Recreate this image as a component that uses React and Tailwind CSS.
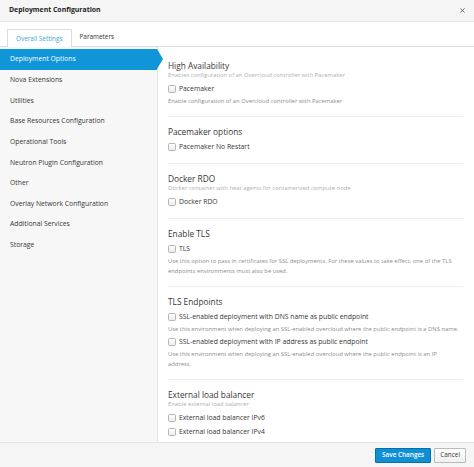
import { X } from "lucide-react";

const navItems = [
  "Deployment Options",
  "Nova Extensions",
  "Utilities",
  "Base Resources Configuration",
  "Operational Tools",
  "Neutron Plugin Configuration",
  "Other",
  "Overlay Network Configuration",
  "Additional Services",
  "Storage",
];

const sections = [
  {
    title: "High Availability",
    description: "Enables configuration of an Overcloud controller with Pacemaker",
    options: [
      { label: "Pacemaker", help: ["Enable configuration of an Overcloud controller with Pacemaker"] },
    ],
  },
  {
    title: "Pacemaker options",
    options: [{ label: "Pacemaker No Restart" }],
  },
  {
    title: "Docker RDO",
    description: "Docker container with heat agents for containerized compute node",
    options: [{ label: "Docker RDO" }],
  },
  {
    title: "Enable TLS",
    options: [
      {
        label: "TLS",
        help: [
          "Use this option to pass in certificates for SSL deployments. For these values to take effect, one of the TLS endpoints environments must also be used.",
        ],
      },
    ],
  },
  {
    title: "TLS Endpoints",
    options: [
      {
        label: "SSL-enabled deployment with DNS name as public endpoint",
        help: ["Use this environment when deploying an SSL-enabled overcloud where the public endpoint is a DNS name."],
      },
      {
        label: "SSL-enabled deployment with IP address as public endpoint",
        help: ["Use this environment when deploying an SSL-enabled overcloud where the public endpoint is an IP", "address."],
      },
    ],
  },
  {
    title: "External load balancer",
    description: "Enable external load balancer",
    options: [{ label: "External load balancer IPv6" }, { label: "External load balancer IPv4" }],
  },
];

function Checkbox({ label, first }) {
  return (
    <label className={`flex items-center h-[11px] gap-[3px] ${first ? "mt-[5px]" : "mt-[3px]"}`}>
      <span className="w-[8px] h-[8px] rounded-[1.5px] border border-[#b5b5b5] bg-gradient-to-b from-white to-[#ececec]" />
      <span className="text-[6.8px] text-[#363636]">{label}</span>
    </label>
  );
}

export default function App() {
  return (
    <div
      className="w-[474px] h-[467px] flex flex-col bg-white overflow-hidden"
      style={{ fontFamily: '"Open Sans", "Liberation Sans", sans-serif' }}
    >
      <div className="h-[22px] shrink-0 bg-[#f5f5f5] border-b border-[#e6e6e6] flex items-center justify-between pl-[9px] pr-[8px]">
        <h1 className="text-[6.9px] font-bold text-[#222]">Deployment Configuration</h1>
        <X className="w-[7px] h-[7px] text-[#555]" strokeWidth={3} />
      </div>

      <div className="h-[25px] shrink-0 flex items-end pl-[7px] border-b border-[#dcdcdc]">
        <div className="h-[18px] px-[8px] flex items-center border border-b-0 border-[#dcdcdc] bg-white -mb-px text-[6.4px] text-[#39a5dc]">
          Overall Settings
        </div>
        <div className="h-[18px] px-[8px] flex items-center text-[6.4px] text-[#363636]">Parameters</div>
      </div>

      <div className="flex-1 flex min-h-0">
        <div className="w-[158px] shrink-0 bg-[#f7f7f7] border-r border-[#e4e4e4] pt-[2px]">
          {navItems.map((item, i) => (
            <div
              key={item}
              className={`relative h-[20.67px] flex items-center pl-[10px] text-[6.8px] ${
                i === 0 ? "bg-[#0f95d8] text-white" : "text-[#363636]"
              }`}
            >
              {item}
              {i === 0 && (
                <span className="absolute right-[-6px] top-0 w-0 h-0 border-y-[10.33px] border-y-transparent border-l-[6px] border-l-[#0f95d8]" />
              )}
            </div>
          ))}
        </div>

        <div className="flex-1 pl-[10px] pr-[11px] pt-[4px] overflow-hidden">
          {sections.map((s) => (
            <div key={s.title} className="pt-[8.5px] pb-[10.5px] border-b border-[#ececec]">
              <h2 className="text-[8.3px] leading-[11px] text-[#363636]">{s.title}</h2>
              {s.description && (
                <p className="text-[5.85px] leading-[8px] text-[#b0b0b0]">{s.description}</p>
              )}
              {s.options.map((o, i) => (
                <div key={o.label}>
                  <Checkbox label={o.label} first={i === 0} />
                  {o.help && (
                    <p className="mt-[1px] text-[5.85px] leading-[10px] text-[#8b8d8f]">
                      {o.help[0]}
                      {o.help[1] && (
                        <>
                          <br />
                          {o.help[1]}
                        </>
                      )}
                    </p>
                  )}
                </div>
              ))}
            </div>
          ))}
        </div>
      </div>

      <div className="h-[25px] shrink-0 bg-[#f5f5f5] border-t border-[#e4e4e4] flex items-center justify-end gap-[3px] pr-[8px]">
        <button className="h-[15px] px-[6px] bg-[#0f8fd4] border border-[#0a6ea6] rounded-[1px] text-[6.4px] font-semibold text-white">
          Save Changes
        </button>
        <button className="h-[15px] px-[5px] bg-gradient-to-b from-white to-[#f0f0f0] border border-[#bbb] rounded-[1px] text-[6.4px] text-[#363636]">
          Cancel
        </button>
      </div>
    </div>
  );
}
